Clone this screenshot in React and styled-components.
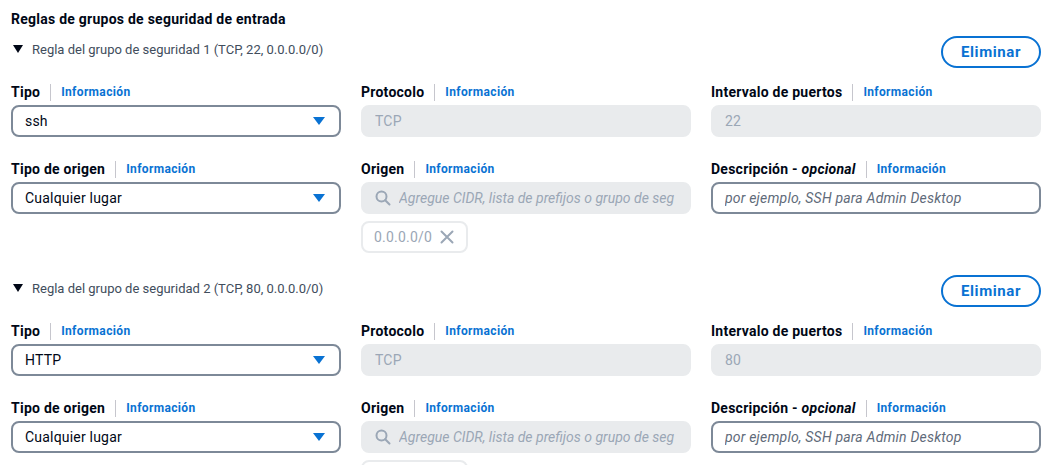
import React from "react";
import styled, { createGlobalStyle } from "styled-components";

const GlobalStyle = createGlobalStyle`
  html, body { margin: 0; padding: 0; background: #ffffff; }
  body { font-family: Roboto, "Open Sans", Arial, sans-serif; color: #000716; letter-spacing: 0.2px; }
  * { box-sizing: border-box; }
`;

const Page = styled.div`
  padding: 9px 7px 0 11px;
  width: 1048px;
  display: flex;
  flex-direction: column;
  gap: 7px;
`;

const Title = styled.h2`
  margin: 0;
  font-size: 14px;
  line-height: 20px;
  font-weight: 700;
  color: #000716;
  letter-spacing: 0.25px;
`;

const Rules = styled.div`
  display: flex;
  flex-direction: column;
  gap: 22px;
`;

const Rule = styled.section`
  display: flex;
  flex-direction: column;
  gap: 13px;
`;

const RuleHeader = styled.div`
  display: flex;
  justify-content: space-between;
  align-items: flex-start;
  height: 32px;
`;

const Expander = styled.div`
  display: flex;
  align-items: center;
  gap: 9px;
  padding-left: 2px;
  height: 26px;
  font-size: 13px;
  letter-spacing: 0;
  color: #414d5c;
`;

const RemoveButton = styled.button`
  height: 32px;
  width: 100px;
  border: 2px solid #0972d3;
  border-radius: 20px;
  background: #ffffff;
  color: #0972d3;
  font-family: inherit;
  font-size: 15px;
  font-weight: 700;
  letter-spacing: 0.6px;
  padding: 0;
  cursor: pointer;
`;

const Grid = styled.div`
  display: grid;
  grid-template-columns: repeat(3, 330px);
  column-gap: 20px;
  row-gap: 21px;
`;

const Field = styled.div`
  display: flex;
  flex-direction: column;
  gap: 2px;
`;

const LabelRow = styled.div`
  display: flex;
  align-items: center;
  height: 22px;
`;

const LabelText = styled.span`
  font-size: 14px;
  font-weight: 700;
  color: #000716;
  letter-spacing: 0.25px;
  em {
    font-style: italic;
    font-weight: 700;
  }
`;

const Divider = styled.span`
  width: 1px;
  height: 17px;
  background: #c6c6cd;
  margin: 0 10px 0 10px;
`;

const InfoLink = styled.a`
  font-size: 12px;
  font-weight: 700;
  color: #0972d3;
  letter-spacing: 0.35px;
  text-decoration: none;
`;

const Box = styled.div`
  height: 32px;
  border-radius: 8px;
  border: 2px solid ${(p) => (p.$disabled ? "#e9ebed" : "#7d8998")};
  background: ${(p) => (p.$disabled ? "#e9ebed" : "#ffffff")};
  display: flex;
  align-items: center;
  padding: 0 14px 0 12px;
  gap: 8px;
  font-size: 14px;
  color: ${(p) => (p.$disabled ? "#9ba7b6" : "#000716")};
  white-space: nowrap;
  overflow: hidden;
`;

const BoxText = styled.span`
  flex: 1;
  overflow: hidden;
  white-space: nowrap;
`;

const Placeholder = styled.span`
  flex: 1;
  overflow: hidden;
  white-space: nowrap;
  font-style: italic;
  letter-spacing: ${(p) => (p.$muted ? "0" : "0.2px")};
  color: ${(p) => (p.$muted ? "#9ba7b6" : "#5f6b7a")};
`;

const Token = styled.div`
  margin-top: 5px;
  align-self: flex-start;
  height: 32px;
  width: 107px;
  border: 2px solid #e9ebed;
  border-radius: 8px;
  display: flex;
  align-items: center;
  gap: 8px;
  padding: 0 10px 0 11px;
  font-size: 14px;
  color: #9ba7b6;
`;

const Caret = () => (
  <svg width="12" height="8" viewBox="0 0 12 8">
    <path d="M0 0 H12 L6 8 Z" fill="#0972d3" />
  </svg>
);

const ExpandTriangle = () => (
  <svg width="10" height="8" viewBox="0 0 10 8">
    <path d="M0 0 H10 L5 8 Z" fill="#000716" />
  </svg>
);

const SearchIcon = () => (
  <svg width="16" height="16" viewBox="0 0 16 16" fill="none" stroke="#9ba7b6" strokeWidth="2" strokeLinecap="round">
    <circle cx="6.5" cy="6.5" r="5" />
    <path d="M10.2 10.2 L14.5 14.5" />
  </svg>
);

const CloseIcon = () => (
  <svg width="14" height="14" viewBox="0 0 14 14" fill="none" stroke="#9ba7b6" strokeWidth="2" strokeLinecap="round">
    <path d="M1.5 1.5 L12.5 12.5 M12.5 1.5 L1.5 12.5" />
  </svg>
);

const Label = ({ children }) => (
  <LabelRow>
    <LabelText>{children}</LabelText>
    <Divider />
    <InfoLink href="#">Información</InfoLink>
  </LabelRow>
);

const RuleBlock = ({ index, port, type }) => (
  <Rule>
    <RuleHeader>
      <Expander>
        <ExpandTriangle />
        <span>{`Regla del grupo de seguridad ${index} (TCP, ${port}, 0.0.0.0/0)`}</span>
      </Expander>
      <RemoveButton>Eliminar</RemoveButton>
    </RuleHeader>
    <Grid>
      <Field>
        <Label>Tipo</Label>
        <Box>
          <BoxText>{type}</BoxText>
          <Caret />
        </Box>
      </Field>
      <Field>
        <Label>Protocolo</Label>
        <Box $disabled>
          <BoxText>TCP</BoxText>
        </Box>
      </Field>
      <Field>
        <Label>Intervalo de puertos</Label>
        <Box $disabled>
          <BoxText>{port}</BoxText>
        </Box>
      </Field>
      <Field>
        <Label>Tipo de origen</Label>
        <Box>
          <BoxText>Cualquier lugar</BoxText>
          <Caret />
        </Box>
      </Field>
      <Field>
        <Label>Origen</Label>
        <Box $disabled>
          <SearchIcon />
          <Placeholder $muted>Agregue CIDR, lista de prefijos o grupo de seg</Placeholder>
        </Box>
        <Token>
          <span>0.0.0.0/0</span>
          <CloseIcon />
        </Token>
      </Field>
      <Field>
        <Label>
          Descripción - <em>opcional</em>
        </Label>
        <Box>
          <Placeholder>por ejemplo, SSH para Admin Desktop</Placeholder>
        </Box>
      </Field>
    </Grid>
  </Rule>
);

export default function App() {
  return (
    <>
      <GlobalStyle />
      <Page>
        <Title>Reglas de grupos de seguridad de entrada</Title>
        <Rules>
          <RuleBlock index={1} port="22" type="ssh" />
          <RuleBlock index={2} port="80" type="HTTP" />
        </Rules>
      </Page>
    </>
  );
}
